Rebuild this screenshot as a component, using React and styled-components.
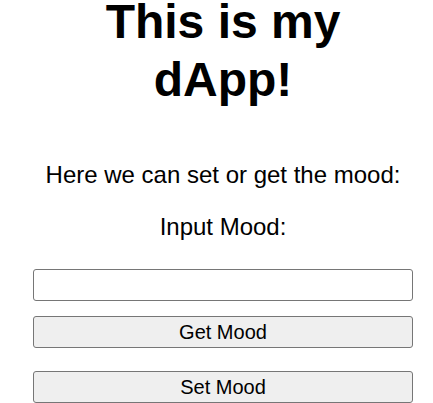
import React, { useState } from "react";
import styled, { createGlobalStyle } from "styled-components";

const GlobalStyle = createGlobalStyle`
  body {
    margin: 0;
    background: #ffffff;
    font-family: "Liberation Sans", Arial, sans-serif;
    color: #000000;
    overflow: hidden;
  }
`;

function App() {
  const [mood, setMood] = useState("");

  return (
    <>
      <GlobalStyle />
      <Page>
        <Title>This is my dApp!</Title>
        <Text>Here we can set or get the mood:</Text>
        <Text>Input Mood:</Text>
        <MoodInput
          type="text"
          value={mood}
          onChange={(e) => setMood(e.target.value)}
        />
        <Button>Get Mood</Button>
        <Button $gap="23px">Set Mood</Button>
      </Page>
    </>
  );
}

export default App;

const Page = styled.div`
  width: 380px;
  margin-left: 33px;
  text-align: center;
  display: flex;
  flex-direction: column;
`;

const Title = styled.h1`
  font-size: 48px;
  font-weight: bold;
  line-height: 58px;
  margin: -7px 0 52px;
`;

const Text = styled.p`
  font-size: 24px;
  margin: 0 0 24px;
`;

const MoodInput = styled.input`
  box-sizing: border-box;
  width: 380px;
  height: 32px;
  margin-top: 4px;
  border: 1px solid #767676;
  border-radius: 3px;
  font-size: 20px;
  font-family: "Liberation Sans", Arial, sans-serif;
  padding: 0 6px;
`;

const Button = styled.button`
  box-sizing: border-box;
  width: 380px;
  height: 32px;
  margin-top: ${(p) => p.$gap || "15px"};
  border: 1px solid #767676;
  border-radius: 3px;
  background: #efefef;
  font-size: 20px;
  font-family: "Liberation Sans", Arial, sans-serif;
  color: #000000;
  padding: 0 6px;
`;
